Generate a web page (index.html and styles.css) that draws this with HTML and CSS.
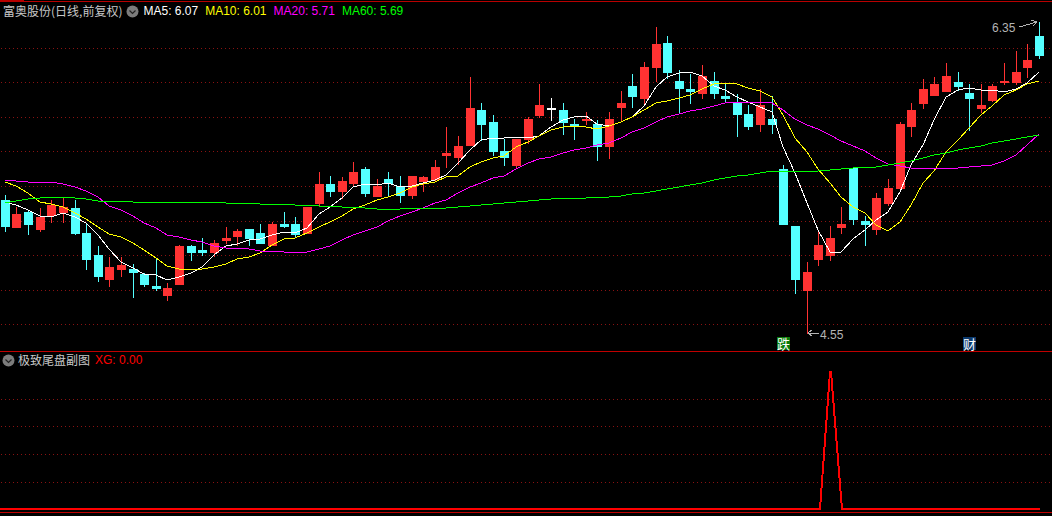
FILE: index.html
```html
<!DOCTYPE html>
<html lang="zh-CN">
<head>
    <meta charset="UTF-8">
    <title>富奥股份</title>
    <link rel="stylesheet" href="styles.css">
</head>
<body>

<div class="panel main-panel">
    <svg id="mainChart" class="chart" width="1052" height="351"></svg>
    <div class="legend">
        <span class="title">富奥股份(日线,前复权)</span>
        <svg class="toggle" width="13" height="13" viewBox="0 0 13 13">
            <circle cx="6.5" cy="6.5" r="6" fill="#7c7c7c"/>
            <path d="M3.5 5.5 L6.5 8.5 L9.5 5.5" fill="none" stroke="#222" stroke-width="1.2"/>
        </svg>
        <span class="ma ma5">MA5: 6.07</span>
        <span class="ma ma10">MA10: 6.01</span>
        <span class="ma ma20">MA20: 5.71</span>
        <span class="ma ma60">MA60: 5.69</span>
    </div>
    <span class="price high-price">6.35</span>
    <span class="price low-price">4.55</span>
    <span class="tag tag-die">跌</span>
    <span class="tag tag-cai">财</span>
</div>

<div class="panel sub-panel">
    <svg id="subChart" class="chart" width="1052" height="165"></svg>
    <div class="legend sub-legend">
        <svg class="toggle" width="13" height="13" viewBox="0 0 13 13">
            <circle cx="6.5" cy="6.5" r="6" fill="#7c7c7c"/>
            <path d="M3.5 5.5 L6.5 8.5 L9.5 5.5" fill="none" stroke="#222" stroke-width="1.2"/>
        </svg>
        <span class="title">极致尾盘副图</span>
        <span class="ma xg">XG: 0.00</span>
    </div>
</div>

<script src="chart.js"></script>
</body>
</html>
```

FILE: styles.css
```css
html, body { margin: 0; padding: 0; background: #000; }
body { width: 1052px; height: 516px; overflow: hidden; font-family: "Liberation Sans", "Noto Sans CJK SC", sans-serif; font-size: 12px; }
.panel { position: relative; }
.main-panel { height: 351px; }
.sub-panel { height: 165px; }
.chart { display: block; shape-rendering: crispEdges; }
.legend { position: absolute; top: 4px; left: 3px; display: flex; align-items: center; height: 14px; white-space: nowrap; }
.sub-legend { top: 2px; left: 2px; }
.title { color: #c8c8c8; font-family: "Noto Sans CJK SC", sans-serif; font-size: 12px; line-height: 14px; }
.toggle { display: block; margin: 0 4px 0 4px; flex: none; }
.sub-legend .toggle { margin: 0 3px 0 0; }
.ma { margin-right: 7px; line-height: 14px; }
.ma5 { color: #fff; }
.ma10 { color: #ff0; }
.ma20 { color: #f0f; }
.ma60 { color: #0f0; }
.xg { color: #f00; margin-left: 5px; }
.price { position: absolute; color: #b4b4b4; line-height: 14px; }
.high-price { left: 992px; top: 21px; }
.low-price { left: 820px; top: 328px; }
.tag { position: absolute; top: 337px; width: 13px; height: 13px; color: #fff; font-family: "Noto Sans CJK SC", sans-serif; font-size: 13px; line-height: 13px; text-align: center; }
.tag-die { left: 777px; background: #0a7a0a; }
.tag-cai { left: 963px; background: #0c3a6e; }
```

FILE: chart.js
```js
const RED = '#ff3232', CYAN = '#54ffff', WHITE = '#ffffff';
const GRID = '#8a1212';

// [color, high, body top, body bottom, low] in screen pixels
const candles = [
    [CYAN,195,200,226,231],[RED,207,214,227,227],[CYAN,211,212,224,234],[RED,208,217,229,231],[RED,200,205,215,222],
    [RED,198,207,212,222],[CYAN,200,208,233,234],[CYAN,224,233,259,269],[CYAN,246,255,276,281],[RED,257,267,279,286],
    [RED,257,265,269,276],[CYAN,264,269,272,297],[CYAN,273,274,284,286],[CYAN,259,286,288,290],[RED,283,288,295,300],
    [RED,245,246,284,284],[CYAN,245,246,252,260],[CYAN,238,250,252,255],[RED,240,243,252,256],[RED,227,238,240,243],
    [RED,229,231,236,245],[CYAN,229,229,238,245],[CYAN,224,233,243,243],[RED,222,224,245,245],[CYAN,212,224,226,227],
    [CYAN,217,224,234,236],[RED,207,207,233,233],[RED,172,184,203,206],[CYAN,176,184,191,196],[RED,177,181,191,198],
    [RED,162,172,183,186],[CYAN,167,169,193,196],[RED,179,186,196,196],[CYAN,172,179,183,195],[CYAN,176,186,195,202],
    [RED,176,176,195,198],[RED,176,177,181,191],[RED,160,167,179,180],[RED,127,153,155,167],[RED,136,146,157,164],
    [RED,77,108,145,145],[CYAN,103,110,124,140],[CYAN,115,122,151,155],[CYAN,139,151,157,165],[RED,139,139,165,167],
    [RED,117,119,139,143],[RED,84,105,115,117],[WHITE,98,108,109,120],[CYAN,103,110,122,134],[CYAN,119,124,126,139],
    [RED,112,119,120,124],[CYAN,120,124,146,160],[RED,112,119,146,158],[RED,91,103,107,121],[CYAN,74,86,96,107],
    [RED,62,67,98,105],[RED,27,44,67,81],[CYAN,36,43,72,78],[CYAN,70,81,88,112],[CYAN,74,89,91,103],
    [RED,65,76,93,98],[CYAN,72,81,93,98],[CYAN,84,96,98,101],[CYAN,94,103,114,136],[CYAN,105,114,126,129],
    [RED,89,105,124,131],[CYAN,96,119,124,133],[CYAN,165,169,224,224],[CYAN,226,226,279,293],[RED,262,272,290,333],
    [RED,230,245,259,265],[RED,226,238,255,260],[RED,207,224,227,233],[CYAN,168,168,219,224],[CYAN,216,221,224,245],
    [RED,193,198,229,234],[RED,179,188,203,205],[RED,122,124,188,191],[RED,103,110,126,136],[RED,79,89,103,108],
    [RED,77,84,95,95],[RED,63,76,91,91],[CYAN,72,82,86,90],[CYAN,84,93,98,130],[RED,84,105,108,112],
    [RED,84,86,100,101],[RED,63,81,82,84],[RED,51,72,82,84],[RED,44,60,67,77],[CYAN,22,36,55,58]
];

const ma5 = [202,205,210,216,217,213,217,223,235,249,262,268,274,275,280,277,273,267,255,246,244,240,239,235,232,233,228,214,207,198,187,184,185,183,187,186,183,180,175,163,150,140,138,138,137,138,136,127,120,117,116,124,126,122,117,106,87,77,73,72,76,86,90,97,102,107,112,147,173,203,230,252,252,239,230,220,212,192,165,145,120,97,90,88,90,90,92,89,83,72];
const ma10 = [182,186,193,202,204,207,213,219,227,234,237,243,250,258,266,269,270,269,267,264,259,257,253,245,239,238,233,227,222,216,209,205,200,197,193,187,184,182,177,176,167,162,158,156,147,142,136,130,127,126,127,129,126,122,117,110,103,101,98,95,89,84,83,84,88,91,97,115,138,152,169,183,197,207,213,225,231,222,205,183,171,152,140,128,115,106,95,90,84,81];
const ma20 = [180,181,182,182,182,184,187,191,197,206,210,216,223,228,235,237,240,242,246,248,248,249,251,251,252,253,252,249,246,240,235,231,227,221,216,212,208,203,200,193,187,183,178,176,169,163,159,157,153,150,148,145,143,138,132,128,122,117,114,111,109,106,103,102,102,102,103,110,119,125,129,135,141,146,151,158,164,166,168,169,168,168,168,167,166,165,161,155,145,134];
const ma60 = [203,201,199,198,197,197,198,199,201,201,201,202,202,202,202,202,202,202,202,203,203,203,204,204,204,205,205,206,206,207,207,208,209,210,209,208,208,208,208,207,206,205,204,203,202,201,200,199,198,198,198,197,197,196,194,193,191,189,187,185,183,180,178,176,175,173,171,171,171,171,171,170,169,168,167,167,165,163,161,158,155,153,150,148,146,143,141,139,137,135];

const centerX = i => Math.floor(5.3 + 11.62 * i);

function svgEl(parent, name, attrs) {
    const el = document.createElementNS('http://www.w3.org/2000/svg', name);
    Object.keys(attrs).forEach(key => el.setAttribute(key, attrs[key]));
    parent.appendChild(el);
    return el;
}

function hline(svg, y, color, h) {
    svgEl(svg, 'rect', { x: 0, y: y, width: 1052, height: h || 1, fill: color });
}

function dotted(svg, y) {
    for (let x = 1; x < 1052; x += 4) {
        svgEl(svg, 'rect', { x: x, y: y, width: 1, height: 1, fill: GRID });
    }
}

function maLine(svg, values, color) {
    const points = values.map((y, i) => centerX(i) + ',' + y).join(' ');
    svgEl(svg, 'polyline', { points: points, fill: 'none', stroke: color, 'stroke-width': 1 });
}

function drawMain() {
    const svg = document.getElementById('mainChart');
    hline(svg, 1, '#b80000');
    svgEl(svg, 'rect', { x: 0, y: 0, width: 24, height: 1, fill: '#b80000' });
    svgEl(svg, 'rect', { x: 23, y: 0, width: 1, height: 2, fill: '#b80000' });
    [48, 82, 117, 151, 186, 221, 255, 290, 324].forEach(y => dotted(svg, y));

    candles.forEach((c, i) => {
        const x = centerX(i);
        svgEl(svg, 'rect', { x: x, y: c[1], width: 1, height: c[4] - c[1] + 1, fill: c[0] });
        svgEl(svg, 'rect', { x: x - 4, y: c[2], width: 9, height: c[3] - c[2] + 1, fill: c[0] });
    });

    maLine(svg, ma5, '#ffffff');
    maLine(svg, ma10, '#ffff00');
    maLine(svg, ma20, '#ff00ff');
    maLine(svg, ma60, '#00ff00');

    // high / low price arrows
    const arrows = 'M1019 27 L1037 22 M1031 20 L1037 22 L1033 26 M808 333 L819 333 M812 330 L808 333 L812 336';
    svgEl(svg, 'path', { d: arrows, fill: 'none', stroke: '#b4b4b4', 'stroke-width': 1 });
}

function drawSub() {
    const svg = document.getElementById('subChart');
    hline(svg, 0, '#c00000');
    [48, 75, 103, 131].forEach(y => dotted(svg, y));
    svgEl(svg, 'polyline', {
        points: '0,158 820,158 830,21 831,21 842,158 1040,158',
        fill: 'none', stroke: '#ff0000', 'stroke-width': 2
    });
    hline(svg, 161, '#c00000');
}

drawMain();
drawSub();
```
